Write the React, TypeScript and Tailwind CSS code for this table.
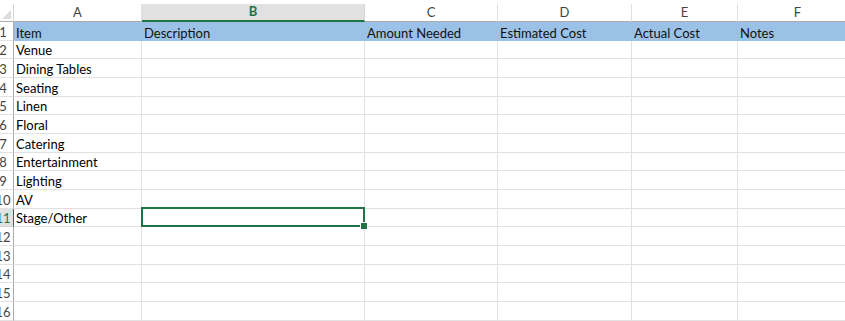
import React from "react";

const columns = [
  { key: "A", width: "w-[128px]" },
  { key: "B", width: "w-[223px]" },
  { key: "C", width: "w-[133px]" },
  { key: "D", width: "w-[134px]" },
  { key: "E", width: "w-[106px]" },
  { key: "F", width: "w-[120px]" },
];

const headerRow = ["Item", "Description", "Amount Needed", "Estimated Cost", "Actual Cost", "Notes"];

const items = [
  "Venue",
  "Dining Tables",
  "Seating",
  "Linen",
  "Floral",
  "Catering",
  "Entertainment",
  "Lighting",
  "AV",
  "Stage/Other",
  "",
  "",
  "",
  "",
  "",
];

const SELECTED_ROW = 11;
const SELECTED_COL = "B";

function RowHeader({ n }: { n: number }) {
  const active = n === SELECTED_ROW;
  return (
    <div
      className={
        active
          ? "w-[14px] shrink-0 overflow-hidden flex items-end border-r border-r-[#217346] border-b border-b-[#d4d4d4] bg-[#e1e1e1] text-[#217346]"
          : "w-[14px] shrink-0 overflow-hidden flex items-end border-r border-r-[#ababab] border-b border-b-[#e1e1e1] text-[#444]"
      }
    >
      <div className="w-[6px] shrink-0 flex justify-center whitespace-nowrap leading-[15px] text-[13px]">{n}</div>
    </div>
  );
}

export default function App() {
  return (
    <div
      className="w-[845px] h-[321px] overflow-hidden bg-white text-black"
      style={{ fontFamily: "Lato, 'Open Sans', sans-serif" }}
    >
      <div className="h-[4px]" />
      {/* column letters */}
      <div className="flex h-[18px]">
        <div className="w-[14px] shrink-0 relative border-b border-b-[#ababab] border-r border-r-[#d4d4d4]">
          <svg className="absolute right-[2px] bottom-[2px]" width="9" height="9" viewBox="0 0 9 9">
            <polygon points="9,0 9,9 0,9" fill="#dcdcdc" />
          </svg>
        </div>
        {columns.map((c) =>
          c.key === SELECTED_COL ? (
            <div
              key={c.key}
              className={`${c.width} shrink-0 flex items-center justify-center bg-[#e1e1e1] border-r border-r-[#d4d4d4] border-b-2 border-b-[#217346] text-[13px] font-bold text-[#217346]`}
            >
              {c.key}
            </div>
          ) : (
            <div
              key={c.key}
              className={`${c.width} shrink-0 flex items-center justify-center border-r border-r-[#e1e1e1] border-b border-b-[#ababab] text-[13px] text-[#444]`}
            >
              {c.key}
            </div>
          )
        )}
      </div>

      {/* row 1: header fill */}
      <div className="flex h-[18.67px]">
        <RowHeader n={1} />
        {columns.map((c, i) => (
          <div
            key={c.key}
            className={`${c.width} shrink-0 bg-[#9bc2e6] flex items-end pl-[2px] text-[13px] leading-[15px] whitespace-nowrap text-[#111]`}
          >
            {headerRow[i]}
          </div>
        ))}
      </div>

      {items.map((label, idx) => {
        const n = idx + 2;
        return (
          <div key={n} className="flex h-[18.67px]">
            <RowHeader n={n} />
            {columns.map((c, i) => (
              <div
                key={c.key}
                className={`${c.width} shrink-0 relative flex items-end pl-[2px] text-[13px] leading-[15px] whitespace-nowrap border-r border-r-[#e1e1e1] border-b border-b-[#e1e1e1]`}
              >
                {i === 0 ? label : ""}
                {n === SELECTED_ROW && c.key === SELECTED_COL && (
                  <div className="absolute left-[-1px] top-[-2px] right-[-1px] bottom-[-1px] border-2 border-[#217346] z-10">
                    <div className="absolute right-[-4px] bottom-[-4px] w-[6px] h-[6px] bg-[#217346] outline outline-1 outline-white" />
                  </div>
                )}
              </div>
            ))}
          </div>
        );
      })}
    </div>
  );
}
